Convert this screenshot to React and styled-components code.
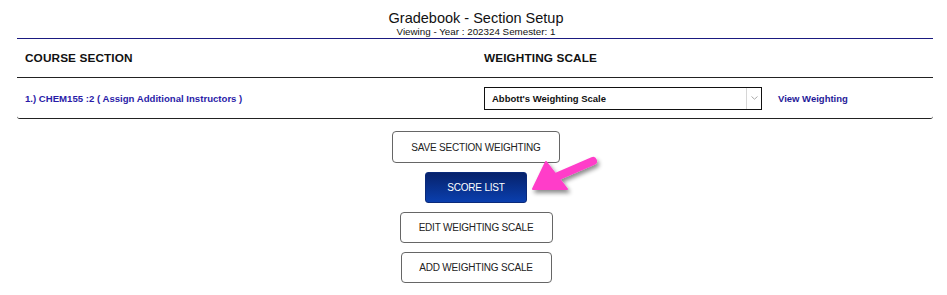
import styled, { createGlobalStyle } from "styled-components";

const GlobalStyle = createGlobalStyle`
  body {
    margin: 0;
    background: #ffffff;
    font-family: "Liberation Sans", Arial, sans-serif;
  }
`;

const Page = styled.div`
  width: 947px;
  height: 295px;
  position: relative;
  overflow: hidden;
  background: #fff;
`;

const Heading = styled.header`
  display: flex;
  flex-direction: column;
  align-items: center;
  padding: 10px 0 0 5px;
  color: #111;

  h1 {
    margin: 0;
    font-size: 14.5px;
    font-weight: normal;
    line-height: 16px;
  }

  p {
    margin: 0;
    font-size: 9.8px;
    line-height: 11px;
  }
`;

const SectionTable = styled.div`
  margin: 1px 14px 0 17px;
  border-top: 1.5px solid #1a1a80;
  border-bottom: 1.5px solid #222;
  border-radius: 0 0 3px 3px;
`;

const Row = styled.div`
  display: grid;
  grid-template-columns: 459px 1fr;
  align-items: center;
  height: ${(p) => p.$height}px;
  padding-left: 8px;
  border-bottom: ${(p) => (p.$divider ? "1.5px solid #222" : "none")};
`;

const HeadCell = styled.div`
  font-size: 11.8px;
  font-weight: bold;
  color: #111;
  letter-spacing: 0.1px;
`;

const CourseLink = styled.span`
  font-size: 9.6px;
  font-weight: bold;
  color: #2a1ca8;
`;

const WeightCell = styled.div`
  display: flex;
  align-items: center;
  gap: 16px;
`;

const Select = styled.div`
  width: 276px;
  height: 21px;
  border: 1px solid #111;
  display: flex;
  align-items: center;
  font-size: 9.5px;
  font-weight: bold;
  color: #111;

  span {
    flex: 1;
    padding-left: 7px;
  }

  i {
    width: 14px;
    height: 100%;
    border-left: 1px solid #d6d6d6;
    display: flex;
    align-items: center;
    justify-content: center;
  }
`;

const ViewLink = styled.span`
  font-size: 9.5px;
  font-weight: bold;
  color: #1f1a99;
`;

const Actions = styled.div`
  display: flex;
  flex-direction: column;
  align-items: center;
  gap: 9px;
  margin-top: 12px;
  padding-left: 5px;
`;

const Button = styled.button`
  width: ${(p) => p.$width}px;
  height: ${(p) => (p.$tall ? 32 : 31)}px;
  border-radius: ${(p) => (p.$primary ? "3px" : "4px")};
  border: 1px solid ${(p) => (p.$primary ? "#0a2a7a" : "#666")};
  background: ${(p) =>
    p.$primary ? "linear-gradient(#07226b, #0a3fae)" : "#fff"};
  color: ${(p) => (p.$primary ? "#fff" : "#222")};
  font-family: "Liberation Sans", Arial, sans-serif;
  font-size: 10px;
  letter-spacing: -0.2px;
  padding: 0;
  cursor: pointer;
`;

const Arrow = styled.svg`
  position: absolute;
  left: 528px;
  top: 152px;
  width: 78px;
  height: 48px;
  overflow: visible;
`;

export default function App() {
  return (
    <Page>
      <GlobalStyle />
      <Heading>
        <h1>Gradebook - Section Setup</h1>
        <p>Viewing - Year : 202324 Semester: 1</p>
      </Heading>

      <SectionTable>
        <Row $height={38} $divider>
          <HeadCell>COURSE SECTION</HeadCell>
          <HeadCell>WEIGHTING SCALE</HeadCell>
        </Row>
        <Row $height={40}>
          <CourseLink>1.) CHEM155 :2 ( Assign Additional Instructors )</CourseLink>
          <WeightCell>
            <Select>
              <span>Abbott's Weighting Scale</span>
              <i>
                <svg width="7" height="4" viewBox="0 0 7 4">
                  <path d="M0.5 0.5 L3.5 3.2 L6.5 0.5" fill="none" stroke="#aaa" strokeWidth="1" />
                </svg>
              </i>
            </Select>
            <ViewLink>View Weighting</ViewLink>
          </WeightCell>
        </Row>
      </SectionTable>

      <Actions>
        <Button $width={168} $tall>SAVE SECTION WEIGHTING</Button>
        <Button $width={102} $primary>SCORE LIST</Button>
        <Button $width={153}>EDIT WEIGHTING SCALE</Button>
        <Button $width={151}>ADD WEIGHTING SCALE</Button>
      </Actions>

      <Arrow viewBox="0 0 78 48">
        <defs>
          <filter id="arrowShadow" x="-30%" y="-30%" width="160%" height="160%">
            <feDropShadow dx="2" dy="3" stdDeviation="2" floodColor="#000" floodOpacity="0.45" />
          </filter>
        </defs>
        <g filter="url(#arrowShadow)" fill="#ff3ec9" stroke="#ff3ec9" strokeLinejoin="round">
          <path d="M65 9 L28 25" strokeWidth="8" strokeLinecap="round" fill="none" />
          <path d="M5 37 L18 10 L39 37 Z" strokeWidth="2" />
        </g>
      </Arrow>
    </Page>
  );
}
